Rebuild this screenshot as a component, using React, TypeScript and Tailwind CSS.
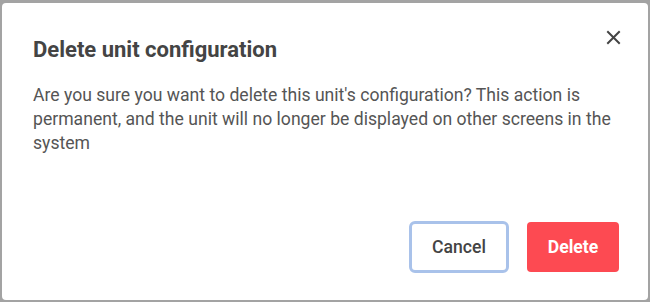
export default function App() {
  return (
    <div
      className="h-[302px] w-[650px] bg-[#a3a3a3] px-[2px] pt-[3px] pb-[2px]"
      style={{ fontFamily: "Roboto, 'Liberation Sans', sans-serif" }}
    >
      <div className="flex h-full flex-col rounded-[4px] bg-white pl-[31px] pr-[29px] pt-[30px] pb-[27px]">
        <div className="flex items-start justify-between">
          <h2 className="pt-[2px] text-[22px] font-bold leading-[30px] text-[#444]">Delete unit configuration</h2>
          <button className="-mt-[3px] -mr-[2px] flex h-[15px] w-[15px] items-center justify-center text-[#444]">
            <svg width="15" height="15" viewBox="0 0 15 15" fill="none" stroke="currentColor" strokeWidth="2" strokeLinecap="square">
              <path d="M2 2L13 13M13 2L2 13" />
            </svg>
          </button>
        </div>
        <p className="mt-[18px] pr-[2px] text-[17.6px] leading-[24px] text-[#555]">
          Are you sure you want to delete this unit's configuration? This action is permanent, and the unit will no longer be
          displayed on other screens in the system
        </p>
        <div className="mt-auto flex justify-end gap-[18px]">
          <button className="h-[52px] w-[100px] rounded-[6px] border-[3px] border-[#a9c2ea] bg-white text-[17.6px] font-medium text-[#444]">
            Cancel
          </button>
          <button className="h-[50px] w-[92px] self-center rounded-[4px] bg-[#fd4a52] text-[17.6px] font-bold text-white">
            Delete
          </button>
        </div>
      </div>
    </div>
  );
}
